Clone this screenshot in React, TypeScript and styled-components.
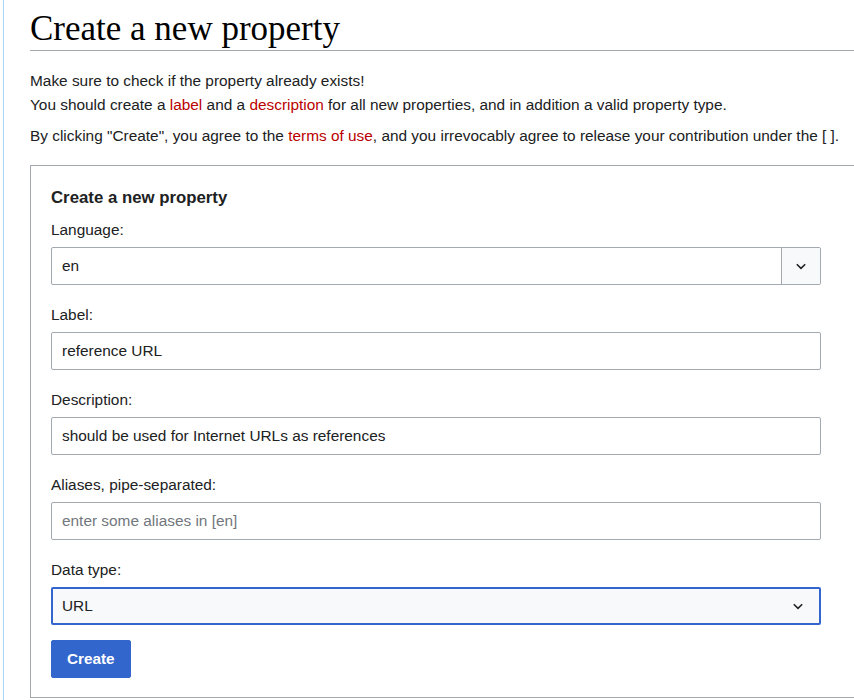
import styled, { createGlobalStyle } from 'styled-components';

const GlobalStyle = createGlobalStyle`
  html, body {
    margin: 0;
    padding: 0;
    background: #fff;
    overflow: hidden;
  }
  body {
    font-family: "Liberation Sans", Arial, sans-serif;
    color: #202122;
  }
`;

const Page = styled.div`
  margin-left: 3px;
  border-left: 1px solid #a7d7f9;
  padding-left: 26px;
  width: 900px;
  min-height: 700px;
  box-sizing: border-box;
`;

const Heading = styled.h1`
  margin: 0;
  padding: 10px 0 2px;
  font-family: "Liberation Serif", "Times New Roman", serif;
  font-weight: normal;
  font-size: 35px;
  line-height: 38px;
  color: #000;
  border-bottom: 1px solid #a2a9b1;
`;

const Intro = styled.p`
  margin: 18px 0 0;
  font-size: 15.4px;
  line-height: 24px;
`;

const Notice = styled.p`
  margin: 7px 0 0;
  font-size: 15.4px;
  line-height: 24px;
`;

const RedLink = styled.a`
  color: #ba0000;
  text-decoration: none;
`;

const FormBox = styled.div`
  margin-top: 17px;
  border: 1px solid #a2a9b1;
  padding: 21px 20px 19px;
  width: 900px;
  box-sizing: border-box;
`;

const Legend = styled.div`
  font-weight: bold;
  font-size: 16.8px;
  line-height: 22px;
  margin-bottom: 11px;
`;

const Field = styled.div`
  width: 770px;
  margin-bottom: 20px;
`;

const Label = styled.label`
  display: block;
  font-size: 15.4px;
  line-height: 20px;
  margin-bottom: 7px;
`;

const TextInput = styled.input`
  display: block;
  width: 100%;
  height: 38px;
  box-sizing: border-box;
  border: 1px solid #a2a9b1;
  border-radius: 2px;
  padding: 0 10px;
  font-family: "Liberation Sans", Arial, sans-serif;
  font-size: 15.4px;
  color: #202122;
  background: #fff;
  outline: none;

  &::placeholder {
    color: #72777d;
  }
`;

const ComboBox = styled.div`
  display: flex;
  height: 38px;
  box-sizing: border-box;
  border: 1px solid #a2a9b1;
  border-radius: 2px;
  overflow: hidden;
`;

const ComboValue = styled.div`
  flex: 1;
  display: flex;
  align-items: center;
  padding: 0 10px;
  font-size: 15.4px;
`;

const ComboButton = styled.div`
  width: 38px;
  display: flex;
  align-items: center;
  justify-content: center;
  border-left: 1px solid #a2a9b1;
  background: #f8f9fa;
`;

const Dropdown = styled.div<{ $focused?: boolean }>`
  display: flex;
  align-items: center;
  justify-content: space-between;
  height: 38px;
  margin-top: 1px;
  box-sizing: border-box;
  border: ${p => (p.$focused ? '2px solid #36c' : '1px solid #a2a9b1')};
  border-radius: 2px;
  background: #f8f9fa;
  padding: 0 15px 0 ${p => (p.$focused ? '9px' : '10px')};
  font-size: 15.4px;
`;

const Actions = styled.div`
  width: 770px;
  margin-top: -5px;
`;

const SubmitButton = styled.button`
  display: block;
  height: 38px;
  padding: 0 15px;
  border: 1px solid #36c;
  border-radius: 2px;
  background: #36c;
  color: #fff;
  font-family: "Liberation Sans", Arial, sans-serif;
  font-weight: bold;
  font-size: 15.3px;
  cursor: pointer;
`;

const Chevron = () => (
  <svg width="12" height="12" viewBox="0 0 20 20" aria-hidden="true">
    <path d="M3 7l7 7 7-7" fill="none" stroke="#202122" strokeWidth="2.6" />
  </svg>
);

export default function App() {
  return (
    <>
      <GlobalStyle />
      <Page>
        <Heading>Create a new property</Heading>
        <Intro>
          Make sure to check if the property already exists!
          <br />
          You should create a <RedLink href="#">label</RedLink> and a{' '}
          <RedLink href="#">description</RedLink> for all new properties, and in addition a valid
          property type.
        </Intro>
        <Notice>
          By clicking "Create", you agree to the <RedLink href="#">terms of use</RedLink>, and you
          irrevocably agree to release your contribution under the [ ].
        </Notice>

        <FormBox>
          <Legend>Create a new property</Legend>

          <Field>
            <Label>Language:</Label>
            <ComboBox>
              <ComboValue>en</ComboValue>
              <ComboButton>
                <Chevron />
              </ComboButton>
            </ComboBox>
          </Field>

          <Field>
            <Label>Label:</Label>
            <TextInput defaultValue="reference URL" />
          </Field>

          <Field>
            <Label>Description:</Label>
            <TextInput defaultValue="should be used for Internet URLs as references" />
          </Field>

          <Field>
            <Label>Aliases, pipe-separated:</Label>
            <TextInput placeholder="enter some aliases in [en]" />
          </Field>

          <Field>
            <Label>Data type:</Label>
            <Dropdown $focused>
              <span>URL</span>
              <Chevron />
            </Dropdown>
          </Field>

          <Actions>
            <SubmitButton>Create</SubmitButton>
          </Actions>
        </FormBox>
      </Page>
    </>
  );
}
